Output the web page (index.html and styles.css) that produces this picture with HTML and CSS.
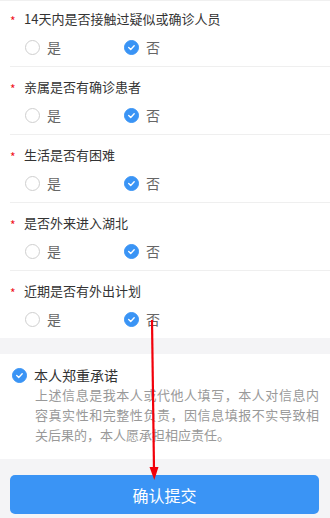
FILE: index.html
```html
<!DOCTYPE html>
<html lang="zh-CN">
<head>
<meta charset="utf-8">
<title>承诺</title>
<link rel="stylesheet" href="styles.css">
</head>
<body>
<div class="page">
  <div class="form">
    <div class="q first">
      <div class="title"><span class="star">*</span>14天内是否接触过疑似或确诊人员</div>
      <div class="opts">
        <div class="opt"><span class="radio"></span><span class="lab">是</span></div>
        <div class="opt"><span class="radio on"><svg viewBox="0 0 15 15"><path d="M4.3 7.6 L6.6 9.7 L10.6 5.6" /></svg></span><span class="lab">否</span></div>
      </div>
    </div>
    <div class="q">
      <div class="title"><span class="star">*</span>亲属是否有确诊患者</div>
      <div class="opts">
        <div class="opt"><span class="radio"></span><span class="lab">是</span></div>
        <div class="opt"><span class="radio on"><svg viewBox="0 0 15 15"><path d="M4.3 7.6 L6.6 9.7 L10.6 5.6" /></svg></span><span class="lab">否</span></div>
      </div>
    </div>
    <div class="q">
      <div class="title"><span class="star">*</span>生活是否有困难</div>
      <div class="opts">
        <div class="opt"><span class="radio"></span><span class="lab">是</span></div>
        <div class="opt"><span class="radio on"><svg viewBox="0 0 15 15"><path d="M4.3 7.6 L6.6 9.7 L10.6 5.6" /></svg></span><span class="lab">否</span></div>
      </div>
    </div>
    <div class="q">
      <div class="title"><span class="star">*</span>是否外来进入湖北</div>
      <div class="opts">
        <div class="opt"><span class="radio"></span><span class="lab">是</span></div>
        <div class="opt"><span class="radio on"><svg viewBox="0 0 15 15"><path d="M4.3 7.6 L6.6 9.7 L10.6 5.6" /></svg></span><span class="lab">否</span></div>
      </div>
    </div>
    <div class="q last">
      <div class="title"><span class="star">*</span>近期是否有外出计划</div>
      <div class="opts">
        <div class="opt"><span class="radio"></span><span class="lab">是</span></div>
        <div class="opt"><span class="radio on"><svg viewBox="0 0 15 15"><path d="M4.3 7.6 L6.6 9.7 L10.6 5.6" /></svg></span><span class="lab">否</span></div>
      </div>
    </div>
  </div>
  <div class="promise">
    <div class="ptitle"><span class="radio on"><svg viewBox="0 0 15 15"><path d="M4.3 7.6 L6.6 9.7 L10.6 5.6" /></svg></span><span>本人郑重承诺</span></div>
    <p class="ptext">上述信息是我本人或代他人填写，本人对信息内容真实性和完整性负责，因信息填报不实导致相关后果的，本人愿承担相应责任。</p>
  </div>
  <div class="footer">
    <button class="submit">确认提交</button>
  </div>
  <svg class="arrow" width="330" height="518" viewBox="0 0 330 518">
    <line x1="152" y1="320" x2="154" y2="470" stroke="#f2000a" stroke-width="2.2"/>
    <polygon points="149.5,467 158.5,467 154.3,480" fill="#f2000a"/>
  </svg>
</div>
</body>
</html>
```
FILE: styles.css
```css
html, body {
  margin: 0;
  padding: 0;
  background: #f4f4f6;
}
body {
  font-family: "Noto Sans CJK SC", "Noto Sans", sans-serif;
  color: #333;
}
.page {
  position: relative;
  width: 330px;
  height: 518px;
  overflow: hidden;
}
.form {
  background: #fff;
  border-top: 1px solid #f0f0f0;
  margin-left: 0;
}
.q {
  margin-left: 10px;
  padding: 10px 0 6px 0;
  border-bottom: 1px solid #efefef;
}
.q.first {
  padding-top: 8px;
}
.q.last {
  border-bottom: none;
}
.title {
  display: flex;
  align-items: center;
  height: 20px;
  font-size: 13px;
  line-height: 20px;
  color: #333;
}
.star {
  width: 14px;
  color: #f0141e;
  font-size: 12px;
  line-height: 20px;
  padding-top: 3px;
}
.opts {
  display: flex;
  height: 26px;
  margin-top: 5px;
  padding-left: 15px;
  align-items: center;
}
.opt {
  display: flex;
  align-items: center;
  width: 99px;
}
.radio {
  width: 13px;
  height: 13px;
  border: 1px solid #cfcfcf;
  border-radius: 50%;
  box-sizing: content-box;
  flex: none;
  display: flex;
}
.radio.on {
  background: #3a94f5;
  border-color: #3a94f5;
}
.radio svg {
  width: 13px;
  height: 13px;
  fill: none;
  stroke: #fff;
  stroke-width: 1.6;
  stroke-linecap: round;
  stroke-linejoin: round;
}
.lab {
  margin-left: 7px;
  font-size: 14px;
  line-height: 20px;
  color: #666;
}
.promise {
  background: #fff;
  margin-top: 16px;
  padding: 11px 12px 14px 12px;
}
.ptitle {
  display: flex;
  align-items: center;
  height: 20px;
  font-size: 14px;
  line-height: 20px;
  color: #333;
}
.ptitle .radio {
  margin-right: 7px;
}
.ptext {
  margin: 0 0 0 23px;
  width: 284px;
  font-size: 13px;
  line-height: 20px;
  color: #999;
  text-align: justify;
}
.footer {
  padding: 16px 11px 0 10px;
}
.submit {
  display: block;
  width: 100%;
  height: 39px;
  border: none;
  border-radius: 5px;
  background: #3a94f5;
  color: #fff;
  font-family: "Noto Sans CJK SC", "Noto Sans", sans-serif;
  font-size: 16px;
  padding: 0;
}
.arrow {
  position: absolute;
  left: 0;
  top: 0;
  pointer-events: none;
}
```
